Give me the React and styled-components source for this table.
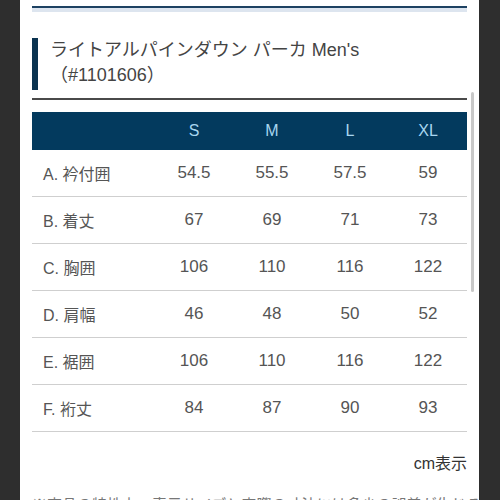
import React from 'react';
import styled, { createGlobalStyle } from 'styled-components';

const GlobalStyle = createGlobalStyle`
  html, body {
    margin: 0;
    padding: 0;
    background: #2e2e2e;
    height: 500px;
    overflow: hidden;
  }
  body {
    font-family: "Liberation Sans", "Noto Sans CJK JP", sans-serif;
  }
`;

const sizes = ['S', 'M', 'L', 'XL'];

const rows = [
  { label: 'A. 衿付囲', values: ['54.5', '55.5', '57.5', '59'] },
  { label: 'B. 着丈', values: ['67', '69', '71', '73'] },
  { label: 'C. 胸囲', values: ['106', '110', '116', '122'] },
  { label: 'D. 肩幅', values: ['46', '48', '50', '52'] },
  { label: 'E. 裾囲', values: ['106', '110', '116', '122'] },
  { label: 'F. 裄丈', values: ['84', '87', '90', '93'] },
];

export default function App() {
  return (
    <>
      <GlobalStyle />
      <Screen>
        <Panel>
          <TopRule />
          <Heading>
            ライトアルパインダウン パーカ Men's
            <br />
            （#1101606）
          </Heading>
          <Divider />
          <SizeTable>
            <thead>
              <tr>
                <HeadCell />
                {sizes.map((s) => (
                  <HeadCell key={s}>{s}</HeadCell>
                ))}
              </tr>
            </thead>
            <tbody>
              {rows.map((r) => (
                <tr key={r.label}>
                  <LabelCell>{r.label}</LabelCell>
                  {r.values.map((v, i) => (
                    <ValueCell key={i}>{v}</ValueCell>
                  ))}
                </tr>
              ))}
            </tbody>
          </SizeTable>
          <Unit>cm表示</Unit>
          <Note>
            ※商品の特性上、表示サイズと実際の寸法には多少の誤差が生じる場合がございます。
          </Note>
          <ScrollThumb />
        </Panel>
      </Screen>
    </>
  );
}

const Screen = styled('div')`
  display: flex;
  justify-content: flex-start;
  height: 500px;
  overflow: hidden;
`;

const Panel = styled('div')`
  position: relative;
  margin-left: 20px;
  width: 459px;
  height: 500px;
  box-sizing: border-box;
  padding: 6px 12px 0;
  background: #fff;
  overflow: hidden;
`;

const TopRule = styled('div')`
  height: 4px;
  border-top: 2px solid #1d4262;
  background: #dde5ef;
`;

const Heading = styled('h2')`
  margin: 26px 0 0;
  padding-left: 12px;
  border-left: 6px solid #0b3350;
  font-size: 18px;
  line-height: 25px;
  font-weight: 400;
  color: #444;
  min-height: 52px;
  box-sizing: border-box;
`;

const Divider = styled('div')`
  margin-top: 8px;
  height: 0;
  border-top: 2px solid #4a4a4a;
`;

const SizeTable = styled('table')`
  margin-top: 12px;
  width: 435px;
  border-collapse: collapse;
  table-layout: fixed;
`;

const HeadCell = styled('th')`
  height: 38px;
  padding: 0;
  background: #033a5e;
  color: #a8d6f0;
  font-size: 16px;
  font-weight: 400;
  text-align: center;
  width: 78px;

  &:first-child {
    width: 123px;
  }
`;

const LabelCell = styled('td')`
  height: 46px;
  padding: 0 0 0 11px;
  border-bottom: 1px solid #cfcfcf;
  font-size: 16px;
  color: #555;
  text-align: left;
`;

const ValueCell = styled('td')`
  height: 46px;
  padding: 0;
  border-bottom: 1px solid #cfcfcf;
  font-size: 17px;
  color: #555;
  text-align: center;
`;

const Unit = styled('div')`
  margin-top: 21px;
  text-align: right;
  font-size: 16px;
  line-height: 22px;
  color: #333;
`;

const Note = styled('p')`
  margin: 19px 0 0;
  font-size: 15px;
  line-height: 22px;
  color: #777;
  white-space: nowrap;
`;

const ScrollThumb = styled('div')`
  position: absolute;
  top: 92px;
  right: 5px;
  width: 3px;
  height: 200px;
  border-radius: 2px;
  background: #c8c8c8;
`;
